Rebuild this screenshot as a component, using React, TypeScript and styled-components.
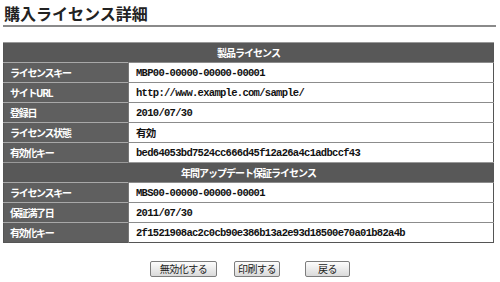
import React from "react";
import styled, { createGlobalStyle } from "styled-components";

type Row = { label: string; value: string };

const productRows: Row[] = [
  { label: "ライセンスキー", value: "MBP00-00000-00000-00001" },
  { label: "サイトURL", value: "http://www.example.com/sample/" },
  { label: "登録日", value: "2010/07/30" },
  { label: "ライセンス状態", value: "有効" },
  { label: "有効化キー", value: "bed64053bd7524cc666d45f12a26a4c1adbccf43" },
];

const updateRows: Row[] = [
  { label: "ライセンスキー", value: "MBS00-00000-00000-00001" },
  { label: "保証満了日", value: "2011/07/30" },
  { label: "有効化キー", value: "2f1521908ac2c0cb90e386b13a2e93d18500e70a01b82a4b" },
];

const App = () => {
  return (
    <Page>
      <GlobalStyle />
      <Title>購入ライセンス詳細</Title>
      <DetailTable>
        <tbody>
          <tr>
            <SectionHead colSpan={2}>製品ライセンス</SectionHead>
          </tr>
          {productRows.map((row) => (
            <tr key={"p" + row.label}>
              <Label>{row.label}</Label>
              <Value>{row.value}</Value>
            </tr>
          ))}
          <tr>
            <SectionHead colSpan={2}>年間アップデート保証ライセンス</SectionHead>
          </tr>
          {updateRows.map((row) => (
            <tr key={"u" + row.label}>
              <Label>{row.label}</Label>
              <Value>{row.value}</Value>
            </tr>
          ))}
        </tbody>
      </DetailTable>
      <Buttons>
        <Button $width={67} $space={0}>無効化する</Button>
        <Button $width={46} $space={17}>印刷する</Button>
        <Button $width={45} $space={25}>戻る</Button>
      </Buttons>
    </Page>
  );
};

// STYLED COMPONENTS //
const GlobalStyle = createGlobalStyle`
  body {
    margin: 0;
    background: #fff;
    font-family: "Noto Sans CJK JP", sans-serif;
  }
`;

const Page = styled.div`
  width: 500px;
  height: 282px;
  padding: 0 4px 0 3px;
  box-sizing: border-box;
`;

const Title = styled.h1`
  margin: 0;
  padding: 3px 0 0 1px;
  height: 22px;
  font-size: 16px;
  line-height: 20px;
  font-weight: bold;
  color: #222;
  border-bottom: 2px solid #8a8a8a;
`;

const DetailTable = styled.table`
  margin-top: 15px;
  width: 491px;
  border-collapse: collapse;
  border: 1px solid #555;
`;

const SectionHead = styled.th`
  height: 19px;
  padding: 0;
  background: #585858;
  color: #fff;
  font-size: 10px;
  letter-spacing: -1px;
  font-weight: bold;
  text-align: center;
  border-top: 1px solid #999;
`;

const Label = styled.th`
  width: 112px;
  height: 19px;
  padding: 0 6px;
  background: #5f5f5f;
  color: #fff;
  font-size: 10px;
  letter-spacing: -1.3px;
  font-weight: bold;
  text-align: left;
  border-top: 1px solid #a8a8a8;
  border-right: 1px solid #777;
`;

const Value = styled.td`
  height: 19px;
  padding: 0 7px;
  font-family: "Liberation Mono", "Noto Sans CJK JP", monospace;
  font-size: 10.5px;
  letter-spacing: -0.7px;
  font-weight: bold;
  color: #111;
  border-top: 1px solid #8c8c8c;
`;

const Buttons = styled.div`
  display: flex;
  justify-content: center;
  margin-top: 18px;
  padding-left: 1px;
`;

const Button = styled.button<{ $width: number; $space: number }>`
  width: ${(p) => p.$width}px;
  height: 16px;
  margin-left: ${(p) => p.$space}px;
  padding: 0;
  font-family: "Noto Sans CJK JP", sans-serif;
  font-size: 10px;
  letter-spacing: -0.5px;
  line-height: 14px;
  color: #222;
  border: 1px solid #7d7d7d;
  border-radius: 2px;
  background: linear-gradient(#fdfdfd, #dadada);
`;

export default App;
